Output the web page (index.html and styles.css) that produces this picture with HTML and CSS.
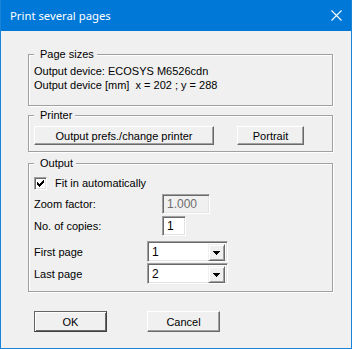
FILE: index.html
```html
<!DOCTYPE html>
<html lang="en">
<head>
    <meta charset="UTF-8">
    <title>Print several pages</title>
    <link rel="stylesheet" href="styles.css">
</head>
<body>
    <div class="window">
        <div class="titlebar">
            <span class="title">Print several pages</span>
            <svg class="close" width="11" height="11" viewBox="0 0 11 11">
                <path d="M0.5 0.5 L10.5 10.5 M10.5 0.5 L0.5 10.5" stroke="#fff" stroke-width="1.1" fill="none"/>
            </svg>
        </div>
        <div class="content">
            <!-- Page sizes -->
            <div class="group group-sizes">
                <div class="legend">Page sizes</div>
                <div class="lines">
                    <div>Output device: ECOSYS M6526cdn</div>
                    <div class="pre">Output device [mm]  x = 202 ; y = 288</div>
                </div>
            </div>

            <!-- Printer -->
            <div class="group group-printer">
                <div class="legend">Printer</div>
                <div class="button-row">
                    <button class="btn btn-prefs">Output prefs./change printer</button>
                    <button class="btn btn-portrait">Portrait</button>
                </div>
            </div>

            <!-- Output -->
            <div class="group group-output">
                <div class="legend">Output</div>
                <div class="row row-check">
                    <span class="checkbox">
                        <svg width="9" height="9" viewBox="0 0 9 9">
                            <path d="M1 3h1v3H1z M2 4h1v3H2z M3 5h1v3H3z M4 4h1v3H4z M5 3h1v3H5z M6 2h1v3H6z M7 1h1v3H7z" fill="#000"/>
                        </svg>
                    </span>
                    <span class="check-label">Fit in automatically</span>
                </div>
                <div class="row row-zoom">
                    <span class="label label-wide">Zoom factor:</span>
                    <span class="field field-zoom disabled">1.000</span>
                </div>
                <div class="row row-copies">
                    <span class="label label-wide">No. of copies:</span>
                    <span class="field field-copies">1</span>
                </div>
                <div class="row row-first">
                    <span class="label label-combo">First page</span>
                    <span class="combo">
                        <span class="combo-text">1</span>
                        <span class="combo-btn">
                            <svg width="7" height="4" viewBox="0 0 7 4"><path d="M0 0h7v1H0z M1 1h5v1H1z M2 2h3v1H2z M3 3h1v1H3z" fill="#000"/></svg>
                        </span>
                    </span>
                </div>
                <div class="row row-last">
                    <span class="label label-combo">Last page</span>
                    <span class="combo">
                        <span class="combo-text">2</span>
                        <span class="combo-btn">
                            <svg width="7" height="4" viewBox="0 0 7 4"><path d="M0 0h7v1H0z M1 1h5v1H1z M2 2h3v1H2z M3 3h1v1H3z" fill="#000"/></svg>
                        </span>
                    </span>
                </div>
            </div>

            <div class="dialog-buttons">
                <button class="btn btn-default">OK</button>
                <button class="btn btn-cancel">Cancel</button>
            </div>
        </div>
    </div>
</body>
</html>
```

FILE: styles.css
```css
body {
    margin: 0;
    font-family: "Liberation Sans", Arial, sans-serif;
    font-size: 11px;
    color: #000;
}
.window {
    width: 352px;
    height: 349px;
    box-sizing: border-box;
    border: 1px solid #1883d7;
    border-top: 0;
    background: #f0f0f0;
    display: flex;
    flex-direction: column;
}
.titlebar {
    height: 31px;
    flex: 0 0 31px;
    background: #0078d7;
    color: #fff;
    display: flex;
    align-items: center;
    justify-content: space-between;
    padding: 0 9px 0 9px;
}
.title {
    font-family: "Noto Sans", sans-serif;
    font-size: 11.3px;
    margin-top: -1px;
}
.close {
    display: block;
}
.content {
    padding: 23px 0 0 27px;
    display: flex;
    flex-direction: column;
}
.group {
    width: 305px;
    box-sizing: border-box;
    border: 1px solid #a0a0a0;
    box-shadow: inset 1px 1px 0 #fff, 1px 1px 0 #fff;
    padding: 0 5px;
    display: flex;
    flex-direction: column;
}
.legend {
    align-self: flex-start;
    margin-top: -8px;
    padding: 0 3px 0 6px;
    background: #f0f0f0;
    line-height: 14px;
}
.group-sizes {
    height: 52px;
}
.lines {
    margin-top: 3px;
    line-height: 14px;
}
.pre {
    white-space: pre;
}
.group-printer {
    margin-top: 9px;
    height: 37px;
}
.button-row {
    display: flex;
    margin-top: 4px;
}
.btn {
    font-family: "Liberation Sans", Arial, sans-serif;
    font-size: 11px;
    color: #000;
    background: #f0f0f0;
    border: 1px solid;
    border-color: #fff #696969 #696969 #fff;
    box-shadow: inset -1px -1px 0 #a0a0a0;
    padding: 0;
    margin: 0;
    line-height: 14px;
}
.btn-prefs {
    width: 180px;
    height: 19px;
}
.btn-portrait {
    width: 67px;
    height: 19px;
    margin-left: 23px;
}
.group-output {
    margin-top: 11px;
    height: 129px;
}
.row {
    display: flex;
    align-items: center;
}
.row-check {
    margin-top: 7px;
    height: 13px;
}
.checkbox {
    width: 13px;
    height: 13px;
    box-sizing: border-box;
    border: 1px solid;
    border-color: #a0a0a0 #fff #fff #a0a0a0;
    box-shadow: inset 1px 1px 0 #696969, inset -1px -1px 0 #e3e3e3;
    background: #fff;
    display: flex;
    align-items: center;
    justify-content: center;
}
.checkbox svg {
    display: block;
}
.check-label {
    margin-left: 8px;
    line-height: 13px;
}
.label {
    line-height: 14px;
}
.label-wide {
    width: 128px;
}
.label-combo {
    width: 113px;
}
.field {
    box-sizing: border-box;
    height: 20px;
    border: 1px solid;
    border-color: #a0a0a0 #fff #fff #a0a0a0;
    box-shadow: inset 1px 1px 0 #696969, inset -1px -1px 0 #e3e3e3;
    background: #fff;
    padding-left: 4px;
    font-size: 12px;
    line-height: 18px;
}
.field.disabled {
    background: #f0f0f0;
    color: #6d6d6d;
}
.row-zoom {
    margin-top: 4px;
}
.field-zoom {
    width: 48px;
}
.row-copies {
    margin-top: 2px;
}
.field-copies {
    width: 24px;
}
.row-first {
    margin-top: 5px;
}
.row-last {
    margin-top: 1px;
}
.combo {
    width: 81px;
    height: 21px;
    box-sizing: border-box;
    border: 1px solid;
    border-color: #a0a0a0 #fff #fff #a0a0a0;
    box-shadow: inset 1px 1px 0 #696969, inset -1px -1px 0 #e3e3e3;
    background: #fff;
    padding: 1px;
    display: flex;
}
.combo-text {
    flex: 1;
    padding-left: 3px;
    font-size: 12px;
    line-height: 18px;
}
.combo-btn {
    width: 17px;
    height: 17px;
    box-sizing: border-box;
    margin: 1px 1px 0 0;
    background: #f0f0f0;
    border: 1px solid;
    border-color: #f0f0f0 #696969 #696969 #f0f0f0;
    box-shadow: inset 1px 1px 0 #fff, inset -1px -1px 0 #a0a0a0;
    display: flex;
    align-items: center;
    justify-content: center;
}
.combo-btn svg {
    display: block;
}
.dialog-buttons {
    display: flex;
    margin-top: 19px;
    padding-left: 6px;
}
.btn-default,
.btn-cancel {
    width: 73px;
    height: 21px;
}
.btn-default {
    border-color: #646464 #404040 #404040 #646464;
    box-shadow: inset 1px 1px 0 #fff, inset -1px -1px 0 #696969;
}
.btn-cancel {
    margin-left: 40px;
}
```
